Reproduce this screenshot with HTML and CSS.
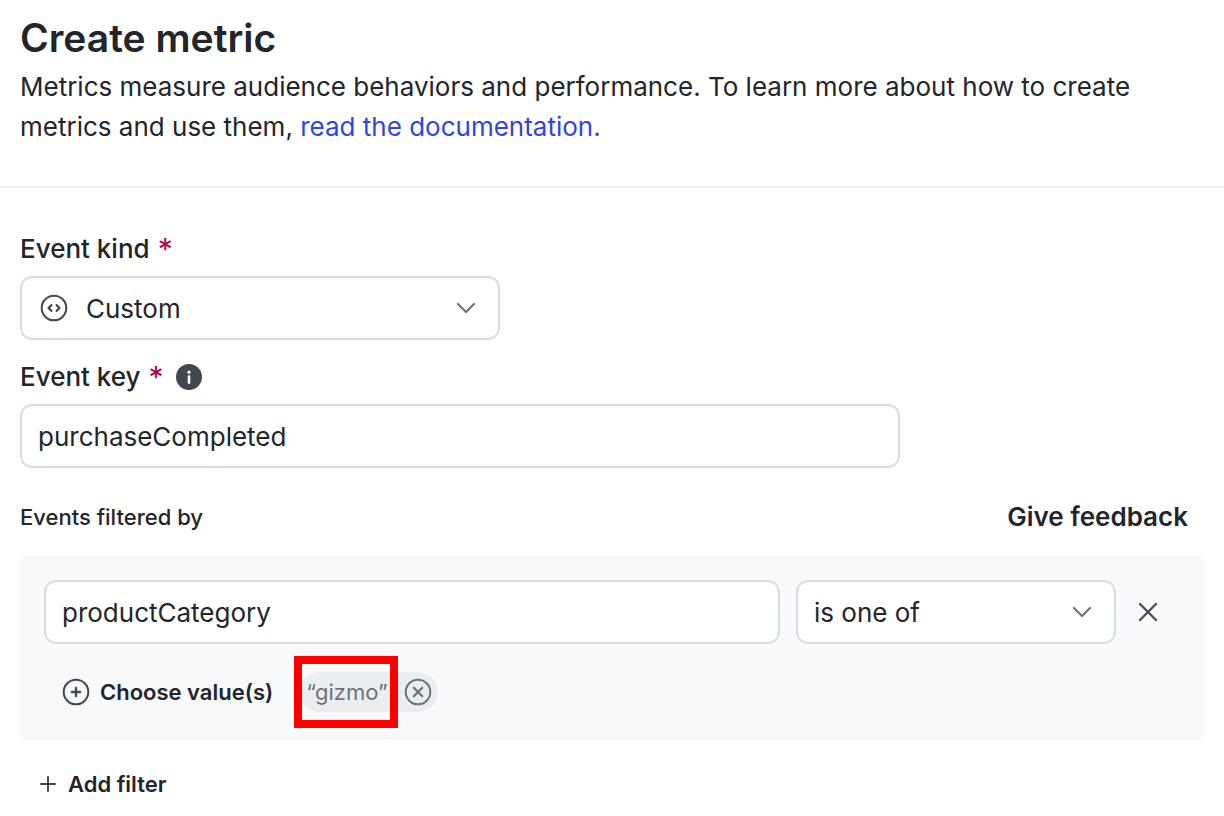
FILE: index.html
```
<!DOCTYPE html>
<html lang="en">
<head>
  <meta charset="UTF-8" />
  <meta name="viewport" content="width=device-width, initial-scale=1.0" />
  <title>Create metric</title>
  <link rel="stylesheet" href="styles.css">
</head>
<body>

<header class="page-header">
  <h1>Create metric</h1>
  <p>Metrics measure audience behaviors and performance. To learn more about how to create metrics and use them, <a href="#">read the documentation.</a></p>
</header>

<form class="metric-form">

  <!-- Event kind -->
  <div class="label-row">
    <label for="event-kind">Event kind</label>
    <span class="required">*</span>
  </div>
  <div class="select-wrap kind-select">
    <select id="event-kind" class="control">
      <option>Custom</option>
    </select>
    <svg class="kind-icon" width="28" height="28" viewBox="0 0 28 28" fill="none" stroke="currentColor" stroke-width="2" stroke-linecap="round" stroke-linejoin="round">
      <circle cx="14" cy="14" r="12.3" />
      <path d="M11.3 11.2L8.6 14l2.7 2.8M16.7 11.2l2.7 2.8-2.7 2.8" stroke-width="2.3" />
    </svg>
    <svg class="chevron" width="20" height="12" viewBox="0 0 20 12" fill="none" stroke="currentColor" stroke-width="2.2" stroke-linecap="round" stroke-linejoin="round">
      <path d="M2 2l8 8 8-8" />
    </svg>
  </div>

  <!-- Event key -->
  <div class="label-row">
    <label for="event-key">Event key</label>
    <span class="required">*</span>
    <svg class="info-icon" width="26" height="26" viewBox="0 0 26 26">
      <circle cx="13" cy="13" r="13" fill="currentColor" />
      <circle cx="13" cy="8.2" r="1.6" fill="#fff" />
      <path d="M13 12.6v6" stroke="#fff" stroke-width="2.6" stroke-linecap="round" />
    </svg>
  </div>
  <input type="text" id="event-key" class="control key-input" value="purchaseCompleted" />

  <!-- Filters -->
  <div class="filter-header">
    <h2>Events filtered by</h2>
    <button type="button" class="feedback">Give feedback</button>
  </div>

  <div class="filter-panel">
    <div class="filter-row">
      <input type="text" class="control attribute-input" aria-label="Attribute" value="productCategory" />
      <div class="select-wrap operator-select">
        <select class="control" aria-label="Operator">
          <option>is one of</option>
        </select>
        <svg class="chevron" width="20" height="12" viewBox="0 0 20 12" fill="none" stroke="currentColor" stroke-width="2.2" stroke-linecap="round" stroke-linejoin="round">
          <path d="M2 2l8 8 8-8" />
        </svg>
      </div>
      <button type="button" class="remove-filter" aria-label="Remove filter">
        <svg width="20" height="20" viewBox="0 0 20 20" fill="none" stroke="currentColor" stroke-width="2.2" stroke-linecap="round">
          <path d="M2 2l16 16M18 2L2 18" />
        </svg>
      </button>
    </div>

    <div class="value-row">
      <button type="button" class="text-button">
        <svg width="28" height="28" viewBox="0 0 28 28" fill="none" stroke="currentColor" stroke-width="2" stroke-linecap="round">
          <circle cx="14" cy="14" r="12.3" />
          <path d="M14 9.8v8.4M9.8 14h8.4" stroke-width="2.3" />
        </svg>
        Choose value(s)
      </button>
      <div class="chip">
        <span>“gizmo”</span>
        <button type="button" aria-label="Remove gizmo">
          <svg width="28" height="28" viewBox="0 0 28 28" fill="none" stroke="currentColor" stroke-width="2" stroke-linecap="round">
            <circle cx="14" cy="14" r="12.3" />
            <path d="M9.8 9.8l8.4 8.4M18.2 9.8l-8.4 8.4" stroke-width="2.3" />
          </svg>
        </button>
        <div class="highlight"></div>
      </div>
    </div>
  </div>

  <button type="button" class="text-button add-filter">
    <svg width="16" height="16" viewBox="0 0 16 16" fill="none" stroke="currentColor" stroke-width="2" stroke-linecap="round">
      <path d="M8 1v14M1 8h14" />
    </svg>
    Add filter
  </button>

</form>

</body>
</html>
```
FILE: styles.css
```
* {
  box-sizing: border-box;
}

body {
  margin: 0;
  font-family: Inter, sans-serif;
  font-size: 26px;
  line-height: 40px;
  color: #23252a;
  background-color: #fff;
}

h1, h2, p {
  margin: 0;
}

button, input, select {
  font: inherit;
  color: inherit;
}

button {
  padding: 0;
  border: none;
  background: none;
  cursor: pointer;
}

svg {
  display: block;
  flex: none;
}

.page-header {
  padding: 9px 20px 39px;
  border-bottom: 2px solid #ebeef1;
}

.page-header h1 {
  font-size: 39px;
  font-weight: 600;
  line-height: 58px;
}

.page-header a {
  color: #3145dd;
  text-decoration: none;
}

.metric-form {
  padding: 40px 20px 20px;
}

.label-row {
  display: flex;
  align-items: center;
  gap: 8px;
  height: 42px;
  margin-bottom: 6px;
}

.label-row label {
  font-weight: 500;
}

.required {
  font-size: 30px;
  color: #b8004d;
}

.info-icon {
  margin-left: 4px;
  color: #414750;
}

.control {
  width: 100%;
  height: 64px;
  padding: 0 16px;
  border: 2px solid #d8dde3;
  border-radius: 12px;
  background-color: #fff;
}

/* icons share one cell with the select */
.select-wrap {
  display: grid;
  align-items: center;
}

.select-wrap > * {
  grid-area: 1 / 1;
}

.select-wrap select {
  appearance: none;
  padding-top: 2px;
}

.select-wrap svg {
  pointer-events: none;
}

.chevron {
  justify-self: end;
  margin-right: 24px;
  color: #6c727a;
}

.kind-select {
  max-width: 480px;
  margin-bottom: 16px;
}

.kind-select select {
  padding-left: 64px;
}

.kind-icon {
  margin-left: 20px;
  color: #414750;
}

.key-input {
  display: block;
  max-width: 880px;
}

.filter-header {
  display: flex;
  align-items: center;
  justify-content: space-between;
  padding: 29px 16px 19px 0;
}

.filter-header h2 {
  font-size: 22px;
  font-weight: 500;
}

.feedback {
  font-weight: 600;
}

.filter-panel {
  padding: 24px;
  border-radius: 6px;
  background-color: #f7f9fb;
}

.filter-row {
  display: flex;
  align-items: center;
}

.attribute-input {
  flex: 1;
  min-width: 0;
  margin-right: 16px;
}

.operator-select {
  width: 320px;
}

.remove-filter {
  display: flex;
  align-items: center;
  justify-content: center;
  width: 64px;
  height: 64px;
  color: #414750;
}

.value-row {
  display: flex;
  align-items: center;
  gap: 27px;
  padding: 28px 0 4px 18px;
}

.text-button {
  display: flex;
  align-items: center;
  gap: 10px;
  font-size: 22px;
  font-weight: 600;
}

.text-button svg {
  color: #414750;
}

.chip {
  position: relative;
  display: flex;
  align-items: center;
  gap: 16px;
  height: 40px;
  padding: 0 6px;
  border-radius: 20px;
  font-size: 22px;
  color: #6c727a;
  background-color: #ebeef1;
}

.highlight {
  position: absolute;
  inset: -16px 40px -16px -6px;
  border: 8px solid #f00;
  pointer-events: none;
}

.add-filter {
  gap: 12px;
  margin: 24px 0 0 20px;
}
```
